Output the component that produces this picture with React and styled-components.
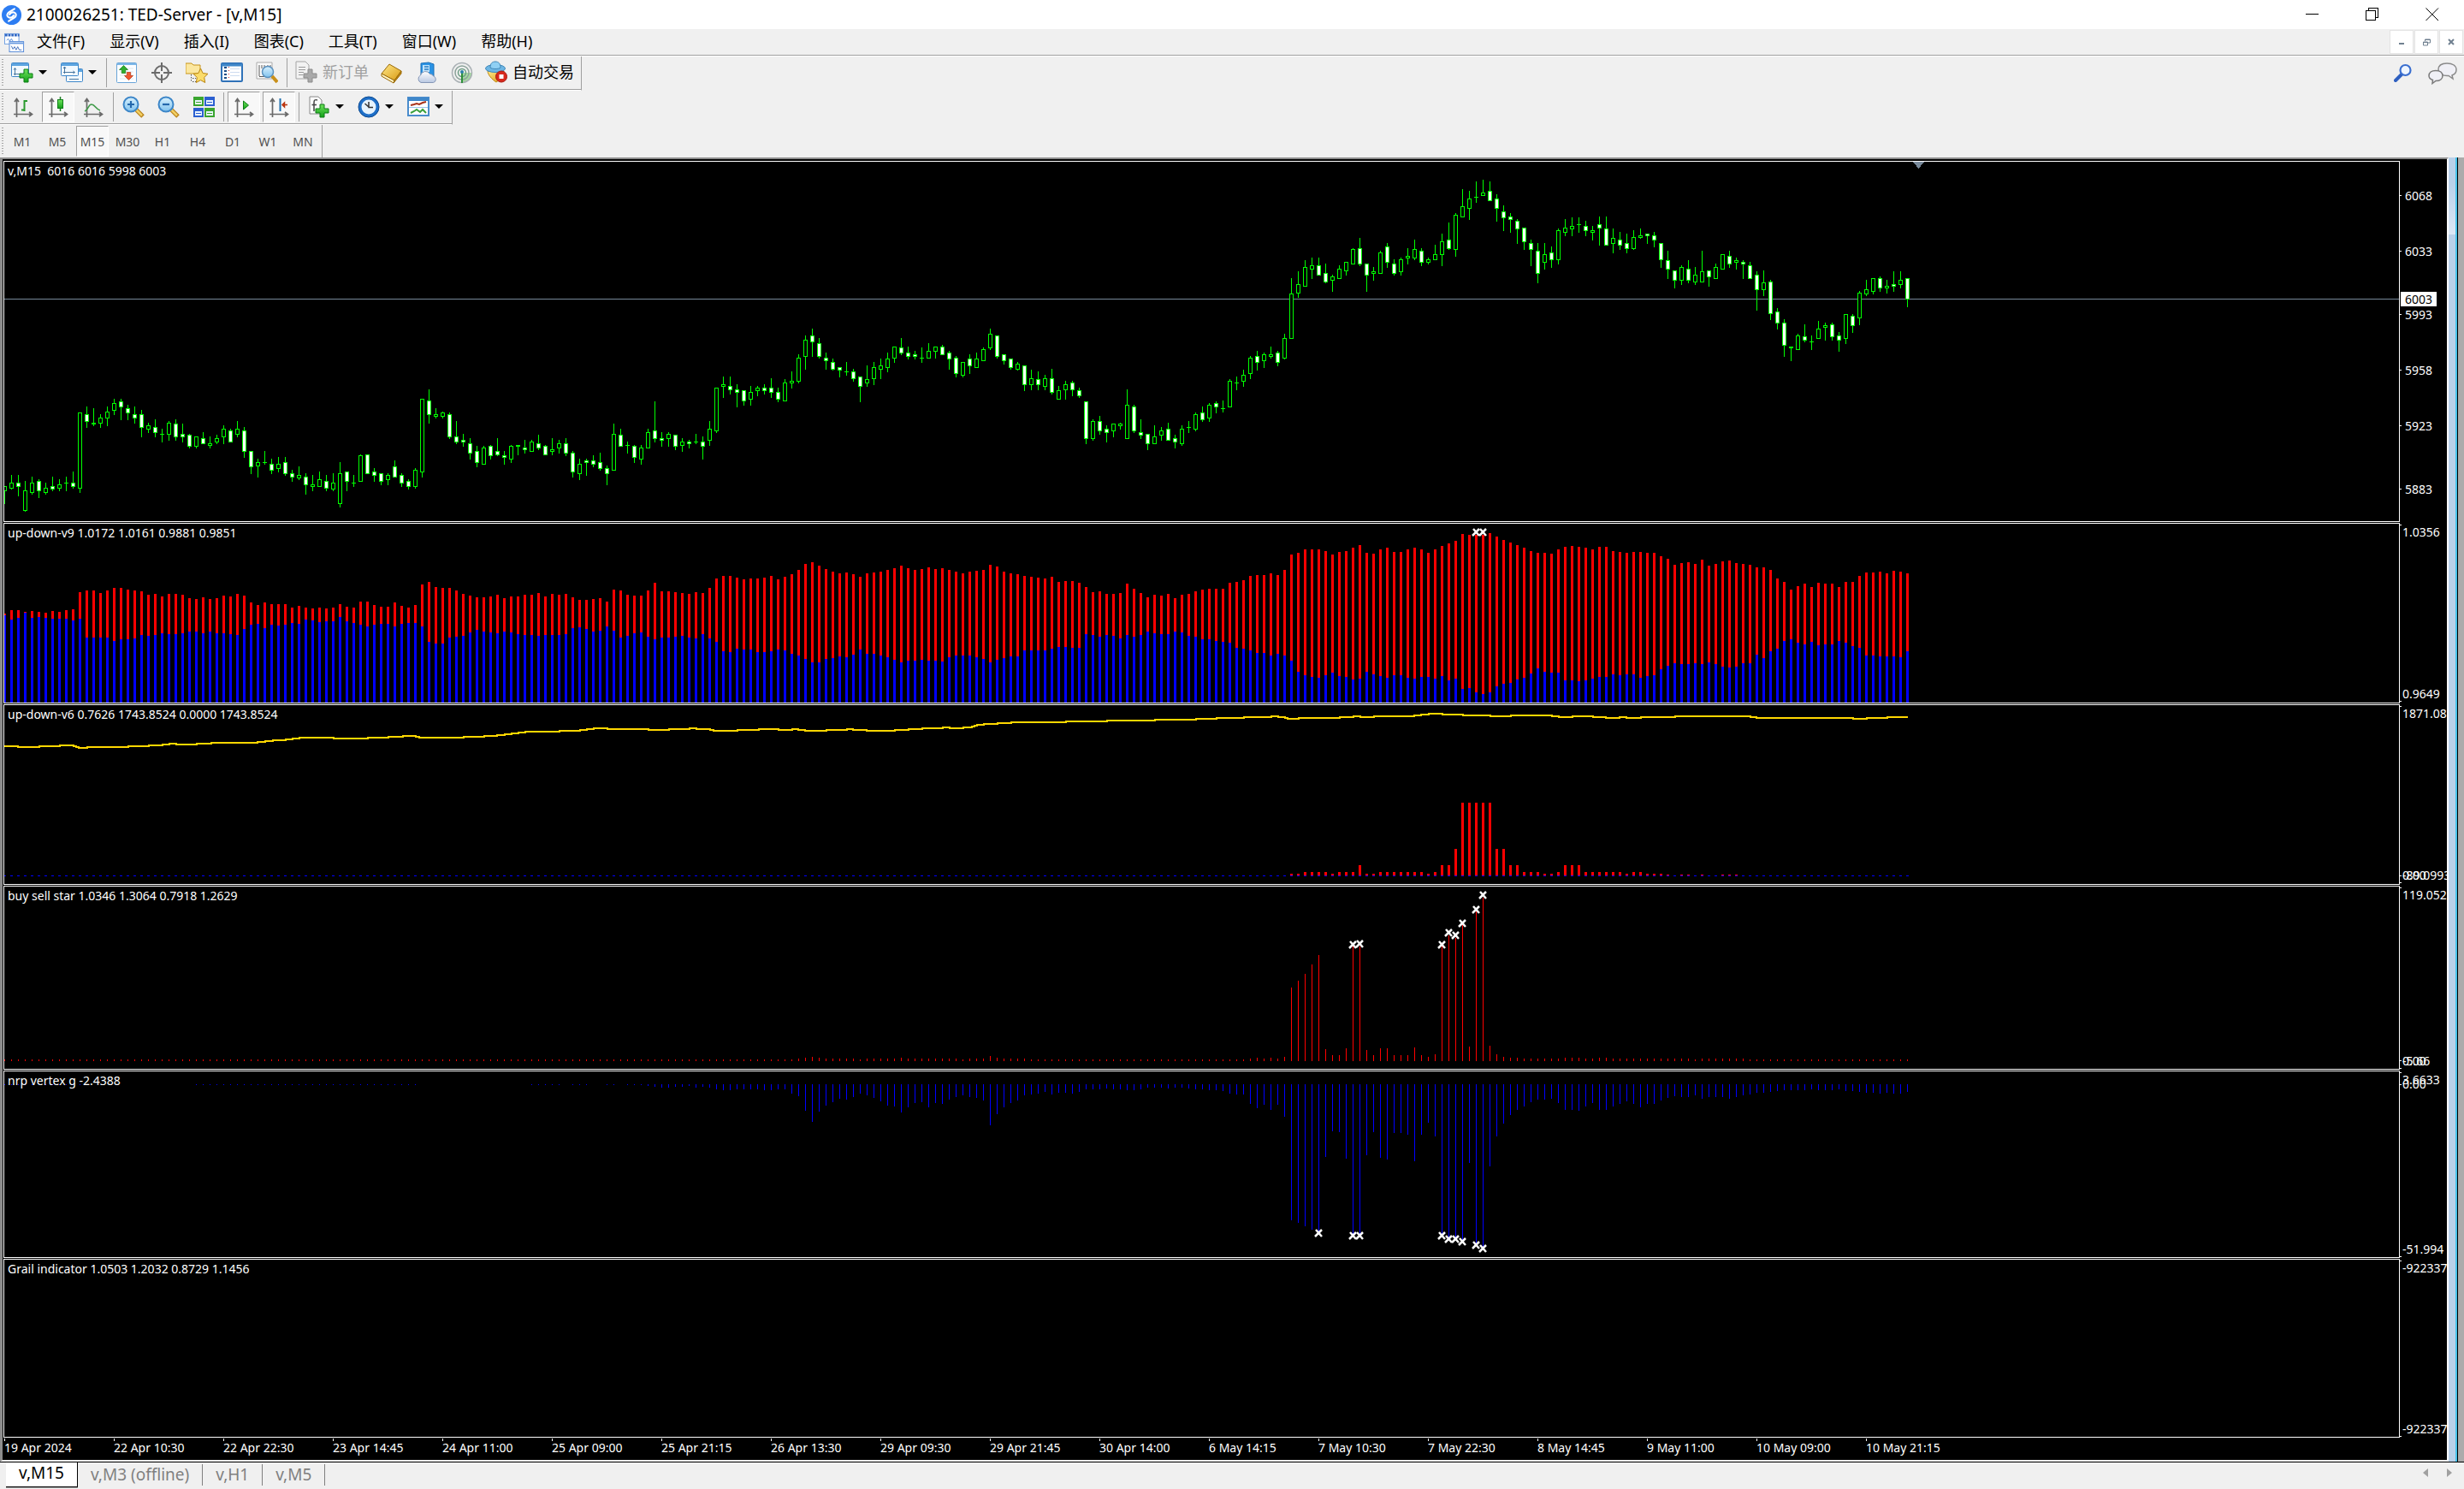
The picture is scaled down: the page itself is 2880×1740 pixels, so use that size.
import React from "react";
import styled, { createGlobalStyle, css } from "styled-components";

/* ---------------------------------------------------------------- data */

/* Quotes are kept in thirds of a pixel below `base`: high, body top, body bottom, low, kind.
   Kind: u = rising (hollow), d = falling (filled), n = no body. */
const SESSIONS = [
  {
    base: 633,
    quotes:
      "503 503 522 567 u,465 492 513 516 u,465 492 507 540 d,486 519 591 594 u,471 492 528 534 u,480 486 522 546 d,492 510 528 534 u,471 504 516 522 d,480 498 513 522 u,471 492 495 522 n,453 492 507 513 d,246 246 513 528 u,225 252 279 300 d,231 282 288 294 d,252 264 285 300 u,225 243 267 294 u,198 213 240 255 u,198 207 228 273 d,219 231 249 273 d,225 252 267 285 d,237 252 300 333 d,282 291 306 318 u,270 297 318 333 d,303 321 324 351 n,276 282 324 345 u,270 285 333 345 d,285 321 333 351 d,321 324 366 372 d,330 330 366 372 u,315 336 357 357 d,330 354 363 372 u,324 336 351 357 u,291 303 333 357 u,303 309 351 351 d,276 303 324 333 u,297 309 384 405 d,381 381 438 462 d,408 420 435 474 u,381 420 423 429 n,408 426 450 462 d,402 426 444 456 u,402 420 462 468 d,447 459 474 489 d,435 465 477 483 u,459 471 501 534 d,465 498 507 522 u,453 480 507 507 u,465 486 513 522 d,459 492 516 522 u,420 459 567 579 u,453 453 489 522 d,465 492 495 507 n,393 396 489 489 u,393 393 462 462 d,441 453 468 489 d,459 459 489 501 d,459 465 483 501 u,414 435 474 474 d,459 465 495 507 d,480 486 507 516 d,441 447 507 513 u,198 198 456 474 u,165 204 255 285 d,231 252 261 267 u,243 246 261 267 u,246 252 333 339 d,276 330 351 357 d,321 342 351 366 d,336 354 390 411 d,363 381 423 438 d,363 369 429 429 u,360 363 399 411 d,336 381 396 399 d,381 396 405 429 d,360 363 411 423 u,360 360 366 396 d,342 369 378 390 d,342 348 384 384 u,324 354 372 378 d,360 363 396 396 d,336 375 384 396 u,342 354 372 390 u,336 354 390 399 d,381 387 456 474 d,408 426 462 483 u,408 414 423 468 d,396 414 429 438 d,387 420 444 450 d,432 441 462 501 d,285 321 450 450 u,303 324 366 366 d,348 360 363 390 n,360 363 405 423 d,360 369 411 429 u,303 315 372 372 u,207 309 339 351 d,315 336 345 366 d",
  },
  {
    base: 453,
    quotes:
      "495 501 519 546 u,504 504 546 558 d,516 528 543 564 u,522 528 537 552 d,501 528 531 537 n,510 528 546 591 d,456 483 525 543 u,339 339 492 498 u,300 327 336 375 u,300 333 348 363 d,327 345 357 408 d,348 348 387 402 d,333 354 381 402 u,333 339 351 369 u,327 339 351 363 d,306 339 357 375 d,339 354 381 390 d,309 321 387 387 u,282 315 324 342 u,222 234 318 324 u,156 171 231 276 u,132 156 180 231 d,165 183 231 237 d,216 234 246 276 d,237 249 276 279 d,267 267 279 303 d,249 282 285 297 n,273 282 309 318 d,300 300 336 390 d,261 309 324 336 u,249 267 309 330 u,237 261 276 309 u,216 237 270 285 u,195 195 237 252 u,165 198 219 225 d,195 216 231 240 d,210 222 231 240 d,198 234 237 252 n,183 210 237 237 u,195 195 213 237 u,189 195 225 225 d,210 216 240 276 d,228 234 291 303 d,249 249 297 303 u,222 237 264 291 d,216 237 270 270 u,198 204 246 246 u,132 150 201 207 u,156 156 231 237 d,222 222 246 258 d,237 237 270 276 d,249 255 276 279 u,261 261 330 351 d,276 306 330 348 u,282 309 330 348 d,294 306 336 348 u,273 306 357 363 d,333 348 381 381 u,315 327 348 381 u,315 321 348 369 d,339 348 369 375 d,387 387 519 537 d,450 456 519 525 u,438 456 492 504 d,471 483 498 531 d,465 465 492 513 u,462 465 474 486 u,345 399 519 519 u,399 405 492 498 d,450 495 507 519 d,501 501 537 558 d,471 510 537 537 u,477 489 507 525 u,462 483 525 525 d,504 516 531 552 d,471 483 537 543 u,456 477 480 498 n,426 432 486 492 u,405 426 453 459 d,393 399 447 459 u,387 393 408 429 d,384 411 414 426 n,309 315 408 408 u,300 321 324 348 n,276 294 318 336 u,228 234 291 309 u,210 228 252 279 d,216 222 246 270 u",
  },
  {
    base: 3,
    quotes:
      "645 672 681 687 u,660 666 702 714 d,600 615 687 690 u,405 459 618 618 u,381 426 459 474 u,342 366 435 435 u,333 360 375 408 u,333 360 396 396 d,354 387 420 423 d,393 399 414 453 u,360 372 408 408 u,348 348 381 396 u,300 303 357 357 u,264 300 357 363 d,354 354 396 453 d,366 381 390 414 u,309 315 390 390 u,282 294 351 369 d,339 354 390 396 d,333 339 384 396 u,300 327 336 357 u,270 303 336 342 u,300 309 351 363 d,333 339 351 357 u,288 321 342 342 u,249 276 324 363 u,210 270 303 306 d,177 183 306 330 u,93 153 192 192 u,99 126 162 201 u,66 120 123 141 n,60 105 117 117 u,66 99 135 135 d,111 126 162 207 d,150 171 195 240 d,177 189 201 246 d,198 204 234 285 d,228 228 279 306 d,270 282 306 363 d,282 309 390 423 d,282 321 351 375 u,294 315 342 369 d,231 237 342 357 u,198 228 246 258 u,192 222 234 258 u,192 216 219 246 n,204 222 240 258 d,222 237 246 273 u,189 216 231 291 d,189 231 291 291 d,231 264 285 318 u,243 270 291 306 d,249 282 303 318 d,237 261 303 306 u,231 255 264 267 u,249 249 258 285 d,243 255 273 297 d,282 282 342 369 d,309 342 375 408 d,378 378 414 441 d,360 366 414 429 u,342 372 414 423 d,366 393 420 429 u,309 381 420 420 u,378 378 402 435 d,354 366 408 408 u,321 321 375 375 u,309 327 357 369 d,333 342 351 375 u,342 348 357 408 d,348 360 408 408 d,381 393 447 519 d,378 420 447 468 u,411 417 531 552 d,510 522 564 585 d,549 561 642 681 d,645 645 651 696 d,600 606 657 657 u,567 609 624 630 d,606 627 630 657 n,555 582 618 618 u,561 570 579 624 u,561 567 612 624 d,594 606 624 663 d,531 531 618 636 u,531 537 573 597 d,450 456 546 570 u,411 444 462 468 u,405 405 453 462 u,399 405 441 453 d,411 432 441 459 u,381 426 435 453 d,381 411 429 441 u,405 405 480 507 d",
  },
];

const CANDLES = SESSIONS.flatMap(({ base, quotes }) =>
  quotes.split(",").map((q) => {
    const [high, top, bottom, low, kind] = q.split(" ");
    const px = (v) => Math.round((base + Number(v)) / 3);
    return { high: px(high), top: px(top), bottom: px(bottom), low: px(low), kind };
  })
);

const list = (s) => s.split(",").map(Number);

const UPPER = list(
  "351,339,339,345,342,345,348,342,345,339,336,276,270,270,279,270,261,261,267,270,273,285,282,291,282,282,285,297,300,294,300,297,288,291,282,288,312,321,312,318,318,318,330,324,330,333,330,333,330,318,327,330,309,309,321,327,327,312,324,330,321,249,240,258,261,261,270,282,288,294,294,291,285,297,291,291,285,285,279,291,282,285,282,294,303,303,300,297,309,267,270,285,288,288,270,243,273,273,276,279,282,276,279,261,228,219,219,225,231,228,228,225,219,231,222,213,198,177,171,183,195,204,210,207,213,222,210,207,204,198,192,183,192,198,195,189,195,192,198,204,210,204,201,198,180,186,204,210,213,219,222,225,228,222,240,237,237,243,258,276,273,282,282,279,246,264,279,294,285,288,282,297,285,282,273,267,264,264,264,243,240,234,219,216,216,210,216,198,144,138,126,126,126,132,144,135,132,120,111,138,141,126,120,135,135,126,120,126,138,126,114,105,96,72,75,75,75,69,81,93,102,111,120,132,138,138,141,126,117,114,117,120,126,117,117,132,135,138,135,135,138,138,150,159,180,174,171,177,162,183,177,168,165,174,177,180,189,189,198,228,240,267,255,246,258,243,246,246,258,240,240,219,207,207,204,210,201,204,210"
);
const LOWER = list(
  "357,372,366,348,366,363,366,369,369,369,375,369,435,435,435,435,447,441,441,438,426,429,426,420,423,423,420,414,414,420,414,420,420,423,426,405,390,387,402,390,393,390,384,387,372,375,381,378,378,363,378,384,390,396,390,387,387,396,387,384,384,396,450,456,456,435,432,429,417,408,414,417,420,414,417,423,426,426,429,426,426,426,423,402,399,405,414,411,396,411,435,429,420,417,432,441,435,435,432,429,435,438,423,438,450,483,486,474,477,477,486,486,483,477,480,492,498,510,522,522,510,507,501,504,495,477,492,492,498,504,513,522,516,516,513,516,516,519,504,498,498,498,504,510,522,513,507,501,501,480,480,480,480,474,468,468,471,471,423,426,432,426,429,438,426,432,426,414,420,423,423,414,417,429,432,441,441,447,450,453,471,474,480,489,489,498,492,498,516,555,567,573,576,567,558,570,573,582,579,555,564,570,576,567,567,576,579,573,573,579,570,585,579,615,612,627,633,627,606,597,594,582,576,561,543,555,558,558,585,585,588,585,579,573,573,564,567,564,564,576,570,567,546,534,525,528,528,525,528,522,528,537,540,537,525,525,495,507,483,474,447,441,453,459,450,462,459,459,447,453,465,471,498,498,501,501,501,504,483"
);

/* Average line: x where the level changes, then the new level (thirds of a pixel). */
const AVERAGE = list(
  "5,816,21,819,46,816,70,813,86,816,89,819,92,822,102,819,150,816,174,813,190,810,198,807,206,810,230,807,247,804,301,801,310,798,319,795,334,792,342,789,350,786,390,789,430,786,454,783,471,780,486,783,490,786,542,783,566,780,581,777,590,774,598,771,606,768,614,765,654,762,678,759,686,756,694,753,710,756,758,759,782,756,806,753,814,756,830,759,834,762,862,759,887,756,910,759,926,756,933,759,941,762,966,759,990,756,997,759,1013,762,1046,759,1062,756,1078,753,1102,750,1110,753,1126,750,1136,747,1139,744,1142,741,1150,738,1166,735,1182,732,1246,729,1294,726,1350,723,1398,720,1422,717,1454,714,1486,711,1494,714,1502,717,1505,720,1518,717,1566,714,1582,711,1590,714,1606,711,1653,708,1661,705,1670,702,1686,705,1710,708,1742,711,1766,708,1814,711,1822,714,1838,711,1862,714,1877,717,1893,714,1901,717,1918,714,1958,711,2046,714,2053,717,2166,720,2182,717,2206,714,2230,714"
);

/* Pulse histogram from bar 188 on (pixels high). */
const PULSE = list(
  "2,2,4,4,4,4,2,4,4,4,12,2,2,4,4,4,4,4,4,4,2,4,12,12,31,85,85,85,85,85,31,31,12,12,4,4,4,2,2,4,12,12,12,4,4,4,4,4,4,2,4,4,2,2,2,1,0,1,1,0,1,0,0,1,1,1"
);

/* Star histogram from bar 116 on (thirds of a pixel). */
const STAR = [
  ...Array(116).fill(6),
  ...list(
    "9,12,15,12,9,9,9,9,9,6,9,9,9,9,9,12,9,9,9,9,9,9,9,9,6,9,9,9,18,12,9,9,9,9,6,6,6,6,6,6,6,6,6,6,6,6,6,6,6,6,6,6,6,6,6,6,6,6,6,6,6,6,6,6,6,6,9,12,9,12,9,15,258,282,306,339,372,42,21,21,45,402,402,39,21,45,45,21,21,21,48,21,15,24,405,440,432,477,51,525,573,54,24,15,12,12,9,9,9,9,9,9,12,12,12,9,9,12,12,9,9,9,9,9,9,9,9,9,9,9,9,6,9,9,9,9,9,9,9"
  ),
  ...Array(24).fill(6),
];

/* Vertex histogram, depth below the zero level (thirds of a pixel). */
const VERTEX = [
  ...Array(12).fill(3),
  ...Array(16).fill(0),
  ...Array(33).fill(3),
  ...Array(16).fill(0),
  ...list("3,3,3,3,3,0,3,3,3,0,0,3,3,0,3,3,3,6,9,12"),
  ...list(
    "12,9,9,6,12,9,12,18,21,21,18,18,18,18,21,21,18,18,33,42,93,132,96,75,63,51,54,45,33,39,48,60,75,78,99,81,66,63,81,66,69,54,45,39,45,48,57,144,105,81,66,57,39,36,33,27,36,30,30,33,27,18,18,18,15,18,18,21,21,18,12,12,12,15,12,12,15,18,18,21,21,24,33,36,36,69,84,72,90,72,114,477,486,498,510,516,255,165,168,261,525,525,249,168,258,264,171,171,177,270,177,135,183,525,537,537,546,276,558,570,288,183,138,108,90,78,63,54,54,51,66,90,90,93,78,66,90,90,78,69,60,69,81,69,69,57,48,42,45,45,39,51,45,45,45,51,45,39,36,30,30,27,24,21,21,21,21,18,21,21,21,18,24,24,27,30,30,33,30,33,33,27"
  ),
];

const TIMES = [
  "19 Apr 2024", "22 Apr 10:30", "22 Apr 22:30", "23 Apr 14:45", "24 Apr 11:00", "25 Apr 09:00",
  "25 Apr 21:15", "26 Apr 13:30", "29 Apr 09:30", "29 Apr 21:45", "30 Apr 14:00", "6 May 14:15",
  "7 May 10:30", "7 May 22:30", "8 May 14:45", "9 May 11:00", "10 May 09:00", "10 May 21:15",
];

/* -------------------------------------------------------------- styles */

const UI_FONT = `"Noto Sans", "Noto Sans CJK SC", sans-serif`;
const CHART_FONT = `"Noto Sans", sans-serif`;

const GlobalStyle = createGlobalStyle`
  * { box-sizing: border-box; }
  html, body { margin: 0; height: 100%; background: #f0f0f0; }
  body { font-family: ${UI_FONT}; font-size: 18px; color: #000; overflow: hidden; }
  button { font: inherit; color: inherit; background: none; border: 0; padding: 0; margin: 0; }
  svg { display: block; }
`;

const Frame = styled.div`
  display: flex;
  flex-direction: column;
  height: 100vh;
  min-width: 0;
`;

const TitleBar = styled.header`
  display: flex;
  align-items: center;
  height: 34px;
  background: #fff;
  padding: 0 2px;
`;

const Title = styled.h1`
  flex: 1;
  margin: 0 0 0 4px;
  font-size: 19px;
  line-height: 32px;
  font-weight: 400;
`;

const WindowButton = styled.button`
  width: 70px;
  height: 34px;
  display: grid;
  place-items: center;
`;

const MenuBar = styled.nav`
  display: flex;
  align-items: center;
  height: 32px;
  padding-left: 5px;
  border-bottom: 1px solid #fff;
  box-shadow: inset 0 -1px #a0a0a0;
`;

const MenuList = styled.div`
  display: flex;
  flex: 1;
  gap: 1px;
  padding-bottom: 4px;
`;

const MenuButton = styled.button`
  padding: 0 14px;
  font-size: 18px;
  line-height: 26px;
`;

const ChildButton = styled.button`
  width: 28px;
  height: 28px;
  margin: 0 1px 1px 0;
  display: grid;
  place-items: center;
  background: #fff;
  border: 1px solid #e3e3e3;
`;

const ToolRow = styled.div`
  display: flex;
  justify-content: space-between;
  height: ${(p) => (p.$last ? 38 : 40)}px;
`;

const Toolbar = styled.div`
  display: flex;
  align-items: center;
  padding-left: ${(p) => p.$lead}px;
  border-right: 1px solid #a0a0a0;
  position: relative;
  ${(p) =>
    !p.$last &&
    css`
      padding-bottom: 2px;
      border-bottom: 1px solid #fff;
      box-shadow: inset 0 -1px #a0a0a0;
    `}
  &::before {
    content: "";
    position: absolute;
    left: 2px;
    top: 3px;
    bottom: 4px;
    width: 2px;
    background: repeating-linear-gradient(#a6a6a6 0 1px, transparent 1px 3px);
  }
`;

const ToolButton = styled.button`
  display: flex;
  align-items: center;
  justify-content: center;
  width: ${(p) => (p.$wide ? "auto" : "38px")};
  height: 36px;
  margin-right: 3px;
  color: ${(p) => (p.$muted ? "#a0a0a0" : "#000")};
  border: 1px solid transparent;
  ${(p) =>
    p.$wide &&
    css`
      padding: 0 4px;
      gap: 6px;
      line-height: 24px;
      padding-bottom: 2px;
      white-space: nowrap;
    `}
  ${(p) =>
    p.$pressed &&
    css`
      background: #f8f8f8;
      border-color: #a0a0a0 #fff #fff #a0a0a0;
    `}
`;

const SplitButton = styled(ToolButton)`
  width: 58px;
  margin-right: 0;
  padding-left: 5px;
  gap: 6px;
  justify-content: flex-start;
`;

const Caret = styled.i`
  border: 5px solid transparent;
  border-top-color: #000;
  border-bottom-width: 0;
`;

const PeriodButton = styled(ToolButton)`
  font-family: ${CHART_FONT};
  font-size: 14px;
  color: #505050;
`;

const Divider = styled.i`
  width: 1px;
  height: 34px;
  margin: 0 4px 0 1px;
  background: #a0a0a0;
`;

const Corner = styled.div`
  display: flex;
  align-items: center;
  gap: 10px;
  padding-right: 8px;
`;

const Workspace = styled.main`
  flex: 1;
  min-height: 0;
  display: flex;
  border-bottom: 1px solid #000;
`;

const ChartWindow = styled.section`
  flex: 1;
  min-width: 0;
  display: flex;
  flex-direction: column;
  gap: 1px;
  padding: 2px 0 0 1px;
  background: #000;
  border-style: solid;
  border-width: 2px 2px 2px 3px;
  border-color: #8c8c8c #fff #f4f4f4 #8c8c8c;
`;

const Pane = styled.div`
  flex: ${(p) => p.$weight} 1 0;
  min-height: 0;
  display: grid;
  grid-template-columns: minmax(0, 1fr) 55px;
`;

const Plot = styled.div`
  position: relative;
  border: 1px solid #fff;
  overflow: hidden;
`;

const Canvas = styled.svg`
  width: 100%;
  height: 100%;
  shape-rendering: crispEdges;
`;

const Caption = styled.span`
  position: absolute;
  left: 4px;
  top: 3px;
  font-family: ${CHART_FONT};
  font-size: 14px;
  line-height: 16px;
  color: #fff;
  white-space: pre;
`;

const Scale = styled.svg`
  width: 100%;
  height: 100%;
  overflow: hidden;
  font-family: ${CHART_FONT};
  font-size: 14px;
  fill: #fff;
`;

const TimeAxis = styled.div`
  display: flex;
  height: 25px;
  padding-left: 1px;
`;

const TimeMark = styled.span`
  width: 128px;
  font-family: ${CHART_FONT};
  font-size: 14px;
  line-height: 16px;
  color: #fff;
  white-space: nowrap;
  &::before {
    content: "";
    display: block;
    width: 1px;
    height: 3px;
    background: #fff;
  }
`;

const Sill = styled.aside`
  width: 18px;
  display: flex;
  background: #ababab;
`;

const Glass = styled.div`
  width: 11px;
  border-right: 1px solid #000;
  box-shadow: inset -2px 0 #46c3ea;
  background: linear-gradient(#b9d1ea 0, #b9d1ea 30px, #dce8f6 90px, #b9d1ea 90px);
`;

const TabBar = styled.footer`
  display: flex;
  height: 31px;
  padding-left: 7px;
  justify-content: space-between;
`;

const Tabs = styled.div`
  display: flex;
  align-items: flex-start;
`;

const Tab = styled.button`
  height: ${(p) => (p.$active ? 29 : 25)}px;
  margin-top: ${(p) => (p.$active ? 0 : 2)}px;
  padding: 0 15px;
  padding-bottom: ${(p) => (p.$active ? 4 : 2)}px;
  font-size: 19px;
  line-height: ${(p) => (p.$active ? 24 : 20)}px;
  color: ${(p) => (p.$active ? "#000" : "#808080")};
  background: ${(p) => (p.$active ? "#fff" : "none")};
  border-right: 1px solid ${(p) => (p.$active ? "#000" : "#808080")};
  border-bottom: ${(p) => (p.$active ? "1px solid #000" : "0")};
  box-shadow: ${(p) => (p.$active ? "0 1px #a0a0a0" : "none")};
`;

const TabArrows = styled.div`
  display: flex;
  gap: 22px;
  padding: 7px 14px 0 0;
`;

const ArrowButton = styled.button`
  width: 6px;
  height: 10px;
`;

/* --------------------------------------------------------------- icons */

const Icon = ({ size = 26, children }) => (
  <svg width={size} height={size} viewBox="0 0 26 26" fill="none" aria-hidden="true">
    {children}
  </svg>
);

const Gradients = () => (
  <svg width="0" height="0" style={{ position: "absolute" }} aria-hidden="true">
    <defs>
      <linearGradient id="green" x1="0" y1="0" x2="0" y2="1">
        <stop offset="0" stopColor="#6fe25c" />
        <stop offset="1" stopColor="#12a018" />
      </linearGradient>
      <linearGradient id="gold" x1="0" y1="0" x2="1" y2="1">
        <stop offset="0" stopColor="#ffe98a" />
        <stop offset="1" stopColor="#d99a12" />
      </linearGradient>
      <linearGradient id="sky" x1="0" y1="0" x2="0" y2="1">
        <stop offset="0" stopColor="#d9f1fd" />
        <stop offset="1" stopColor="#7fc2ee" />
      </linearGradient>
      <linearGradient id="cloud" x1="0" y1="0" x2="0" y2="1">
        <stop offset="0" stopColor="#fff" />
        <stop offset="1" stopColor="#b9c8e2" />
      </linearGradient>
    </defs>
  </svg>
);

const Plus = ({ x, y, fill = "url(#green)", stroke = "#0b7d12" }) => (
  <path
    d={`M${x + 5} ${y}h5v5h5v5h-5v5h-5v-5h-5v-5h5z`}
    fill={fill}
    stroke={stroke}
    strokeWidth="1"
  />
);

const Panel = ({ x, y, w, h }) => (
  <g>
    <rect x={x + 0.5} y={y + 0.5} width={w} height={h} rx="1" fill="#f2f9ff" stroke="#3f87c9" />
    <rect x={x + 1} y={y + 1} width={w - 1} height="3" fill="#5da5e0" />
  </g>
);

const LogoIcon = () => (
  <Icon size={25}>
    <circle cx="12" cy="13" r="12" fill="#2d7df2" />
    <path d="M15.500 5.500L9 9.500c-3.500 2.200-3 5.500 0 6.500 2.500.8 4.500-.5 5.500-2.500" stroke="#fff" strokeWidth="2.200" strokeLinecap="round" />
    <path d="M8.500 20.500l6.500-4c3.500-2.200 3-5.500 0-6.500-2.500-.8-4.500.5-5.500 2.500" stroke="#fff" strokeWidth="2.200" strokeLinecap="round" />
  </Icon>
);

const ChartsIcon = () => (
  <Icon size={24}>
    <rect x=".5" y="1.500" width="18" height="13" fill="#fff" stroke="#6a9be0" />
    <path d="M1 3.500h18" stroke="#2f66c4" strokeWidth="3" strokeDasharray="3 1" />
    <path d="M3 10l2-2 2 3 2-3 2 3" stroke="#4d84d6" />
    <rect x="6.500" y="11.500" width="18" height="13" fill="#fff" stroke="#4d84d6" />
    <path d="M7 13.500h18" stroke="#6a9be0" strokeWidth="2" />
    <path d="M9 17l2 4 2-3 2 4 2-4 2 4h3" stroke="#3868b8" />
  </Icon>
);

const NewChartIcon = () => (
  <Icon>
    <Panel x={0} y={1} w={20} h={16} />
    <path d="M4.500 8v8M3 9.500l1.500-2 1.500 2M3 14.500h13M14.500 13l2 1.500-2 1.500" stroke="#48769e" />
    <Plus x={10} y={9} />
  </Icon>
);

const ProfilesIcon = () => (
  <Icon>
    <Panel x={6} y={8} w={19} h={15} />
    <Panel x={0} y={1} w={20} h={15} />
    <path d="M4.500 6v8M3 12.500h13M14.500 11l2 1.500-2 1.500M3 8l1.500-2L6 8M10 20.500h11" stroke="#48769e" />
  </Icon>
);

const MarketIcon = () => (
  <Icon>
    <rect x="1.500" y="1.500" width="23" height="23" rx="1" fill="#fbfdff" stroke="#6aa5d8" />
    <rect x="2" y="2" width="22" height="2" fill="#7db8e8" />
    <path d="M5 8h16M5 12h16M5 16h16M5 20h16" stroke="#dde7ee" />
    <path d="M9.500 4.500l5 5h-2.800v4H7.300v-4H4.500z" fill="#2fae2c" stroke="#157a17" strokeWidth=".7" />
    <path d="M15.500 21.500l5-5h-2.800v-4h-4.400v4h-2.800z" fill="#f0552e" stroke="#b3330f" strokeWidth=".7" />
  </Icon>
);

const CrosshairIcon = () => (
  <Icon>
    <circle cx="13" cy="13" r="8" stroke="#6b6b6b" strokeWidth="2" />
    <path d="M13 1v10M13 15v10M1 13h10M15 13h10" stroke="#6b6b6b" strokeWidth="2" />
  </Icon>
);

const NavigatorIcon = () => (
  <Icon>
    <path d="M0 2h7l2 2h8v10H0z" fill="#fbe7a0" stroke="#c79318" />
    <path d="M6.500 15v9M8 19.500h4M8 23.500h4" stroke="#555" strokeDasharray="1.500 1.500" />
    <path d="M17.500 8l2.600 5.500 5.900.8-4.300 4.200 1 6-5.200-2.900-5.200 2.900 1-6L9 14.300l5.900-.8z" fill="#fbdc6a" stroke="#b98510" />
  </Icon>
);

const TerminalIcon = () => (
  <Icon>
    <rect x="1" y="2" width="24" height="21" rx="1" fill="#fff" stroke="#2f72b8" strokeWidth="2" />
    <path d="M1 4h24" stroke="#3f87c9" strokeWidth="3" />
    <path d="M5.500 6v16" stroke="#1d4d86" strokeWidth="3" strokeDasharray="2 2" />
    <path d="M9.500 6v16" stroke="#c33" strokeDasharray="1 3" />
    <path d="M11 8.500h11M11 12.500h11M11 16.500h11" stroke="#cddcf0" />
  </Icon>
);

const TesterIcon = () => (
  <Icon>
    <path d="M1 1h18v19H1z" fill="#fafafa" stroke="#aaa" />
    <path d="M4 4v13M7 4v4M10 4v3M14 4v5M17 4v4M4 17.500h8" stroke="#5a5a5a" />
    <circle cx="14" cy="12" r="6.500" fill="url(#sky)" stroke="#5c92bf" strokeWidth="1.500" />
    <path d="M19 17l6 7" stroke="#c9901a" strokeWidth="4" />
  </Icon>
);

const OrderIcon = () => (
  <Icon>
    <path d="M1 1h11l4 4v16H1z" fill="#f2f2f2" stroke="#a4a4a4" />
    <path d="M4 7.500h8M4 10.500h8M4 13.500h6M4 16.500h5" stroke="#9a9a9a" />
    <Plus x={10} y={10} fill="#a9a9a9" stroke="#8b8b8b" />
  </Icon>
);

const BookIcon = () => (
  <Icon>
    <path d="M1 14L10 3l14 8-8 11z" fill="url(#gold)" stroke="#9a6a08" />
    <path d="M1 14v3l14 8 1-3z" fill="#fff3c4" stroke="#9a6a08" />
    <path d="M16 22l-1 3 9-11v-3z" fill="#c98d12" stroke="#9a6a08" />
  </Icon>
);

const ServerIcon = () => (
  <Icon>
    <path d="M6 2l9-1 6 2v14H6z" fill="#2b93e4" stroke="#1a6fb8" />
    <path d="M8 4h8v8H8z" fill="#bfe2fa" />
    <path d="M10 6h5M10 9h5" stroke="#2b7fc4" strokeWidth="1.500" />
    <path d="M6 24.500a4.700 4.700 0 0 1-.5-8.500 6 6 0 0 1 11-1.500 4 4 0 0 1 4 2.500 3.900 3.900 0 0 1 0 7.500z" fill="url(#cloud)" stroke="#8496b6" />
  </Icon>
);

const SignalIcon = () => (
  <Icon>
    <path d="M13 13v12c7-1 12-6 12-12z" fill="#a6d8a2" />
    <circle cx="13" cy="13" r="11.500" stroke="#a9b0b4" strokeWidth="1.500" />
    <circle cx="13" cy="13" r="8" stroke="#8ca29a" strokeWidth="1.500" />
    <circle cx="13" cy="13" r="4.500" stroke="#6b9c84" strokeWidth="1.500" />
    <path d="M13 25V13" stroke="#2f8f3a" strokeWidth="2" />
    <circle cx="13" cy="12" r="2" fill="#2a7fa8" />
  </Icon>
);

const ExpertIcon = () => (
  <Icon>
    <path d="M3 12h19c0 4-4 10-9 13-5-3-10-9-10-13z" fill="url(#gold)" stroke="#c08a14" />
    <ellipse cx="12" cy="9" rx="11.500" ry="4.500" fill="#6db6e4" stroke="#3f87b8" />
    <path d="M6 8c0-5 2.500-7 6-7s6 2 6 7c-2 2-10 2-12 0z" fill="#8fd0f4" stroke="#3f87b8" />
    <circle cx="19" cy="18.500" r="6.500" fill="#d8281c" stroke="#a81a10" />
    <rect x="16.500" y="16" width="5" height="5" fill="#fff" />
  </Icon>
);

const Axes = () => (
  <path d="M5.500 25V4M3 7l2.500-3.500L8 7M2 21.500h21M20 19l3.500 2.500L20 24" stroke="#6a6a6a" strokeWidth="1.700" />
);

const BarsIcon = () => (
  <Icon>
    <Axes />
    <path d="M14.500 5v13M14.500 6H18M11 16.500h3.500" stroke="#2a9a2e" strokeWidth="2" />
  </Icon>
);
const CandlesIcon = () => (
  <Icon>
    <Axes />
    <path d="M15.500 1v17" stroke="#1c7d22" strokeWidth="1.500" />
    <rect x="12.500" y="4.500" width="6" height="10" fill="url(#green)" stroke="#0f7f18" />
  </Icon>
);
const LineIcon = () => (
  <Icon>
    <Axes />
    <path d="M3 18c4-1 4-8 8-8s5 6 10 7" stroke="#3f9a48" strokeWidth="1.600" />
  </Icon>
);

const LensIcon = ({ plus }) => (
  <Icon>
    <path d="M16 16l8 8" stroke="#b9831c" strokeWidth="5" />
    <path d="M16 16l7 7" stroke="#f2cf63" strokeWidth="2.500" />
    <circle cx="10" cy="10" r="8.500" fill="url(#sky)" stroke="#3c86c8" strokeWidth="2" />
    <path d={plus ? "M6 10h8M10 6v8" : "M6 10h8"} stroke="#2468ac" strokeWidth="2.200" />
  </Icon>
);

const TilesIcon = () => (
  <Icon>
    {[[1, 1, "#3aa52f"], [14, 1, "#2b5fd0"], [1, 14, "#2b5fd0"], [14, 14, "#3aa52f"]].map(([x, y, c]) => (
      <g key={`${x}-${y}`}>
        <rect x={x} y={y} width="12" height="11" fill={c} />
        <rect x={x + 2} y={y + 4} width="8" height="5" fill="#eaf4ff" />
        <path d={`M${x + 3} ${y + 6.500}h6`} stroke={c} />
      </g>
    ))}
  </Icon>
);

const ScrollIcon = () => (
  <Icon>
    <Axes />
    <path d="M12.500 6l6 5-6 5z" fill="url(#green)" stroke="#0f7f18" />
  </Icon>
);
const ShiftIcon = () => (
  <Icon>
    <Axes />
    <path d="M14.500 3v15" stroke="#1f6fae" strokeWidth="2" />
    <path d="M23 10.500h-4M19.500 8L17 10.500l2.500 2.500z" fill="#d8461c" stroke="#b8340f" strokeWidth="1.500" />
  </Icon>
);

const IndicatorsIcon = () => (
  <Icon>
    <path d="M2 1h10l4 4v16H2z" fill="#fbfbfb" stroke="#8a8a8a" />
    <path d="M11 5c-3-1-4 0-4 3v10M4.500 10.500H10" stroke="#444" strokeWidth="1.500" />
    <Plus x={9} y={10} />
  </Icon>
);

const ClockIcon = () => (
  <Icon>
    <circle cx="13" cy="13" r="12" fill="#1e6fc8" stroke="#0e4a90" />
    <circle cx="13" cy="13" r="8.500" fill="#e6f3fd" />
    <path d="M13 7v6.500h5M13 13L8.500 9" stroke="#333" strokeWidth="1.500" />
  </Icon>
);

const TemplateIcon = () => (
  <Icon>
    <rect x="1" y="2" width="24" height="21" fill="#fff" stroke="#4a8ccc" strokeWidth="2" />
    <path d="M1 4h24" stroke="#3f87c9" strokeWidth="4" />
    <path d="M4 11l4-1 3-1 3 1 4-2 4-1" stroke="#a83218" strokeWidth="2" />
    <path d="M2 13.500h22" stroke="#9cc4e8" />
    <path d="M4 20l4-2 3-2 4 3 3-3 4 4" stroke="#3aa03c" strokeWidth="2" />
  </Icon>
);

const SearchIcon = () => (
  <svg width="22" height="22" viewBox="0 0 22 22" fill="none" aria-hidden="true">
    <path d="M9 13l-7 7" stroke="#2e5fc0" strokeWidth="4" strokeLinecap="round" />
    <circle cx="13.500" cy="8" r="6" fill="#eef5ff" stroke="#3b6fd0" strokeWidth="2.200" />
  </svg>
);

const ChatIcon = () => (
  <svg width="34" height="26" viewBox="0 0 34 26" fill="none" aria-hidden="true">
    <path d="M22 1c7 0 11 3 11 7.500 0 3-2 5.500-5 6.500l1 4-5-3.500c-7 .5-12-2.500-12-7S15 1 22 1z" fill="#f0f0f6" stroke="#8a8a8a" strokeWidth="1.500" />
    <path d="M9 9.500c5 0 8 2.500 8 6s-3 6-8 6L5 24.500l.5-4C2.500 19.500 1 17.500 1 15.500c0-3.500 3-6 8-6z" fill="#f0f0f6" stroke="#7a7a7a" strokeWidth="1.500" />
  </svg>
);

/* -------------------------------------------------------------- charts */

const STEP = 8;

const Candle = ({ index, high, top, bottom, low, kind }) => {
  const x = index * STEP;
  return (
    <g fill="#0f0">
      <rect x={x} y={high} width="1" height={Math.max(low - high, 1)} />
      <rect x={x - 2} y={top} width="5" height={bottom - top} />
      {kind !== "n" && bottom - top > 2 && (
        <rect x={x - 1} y={top + 1} width="3" height={bottom - top - 2} fill={kind === "d" ? "#fff" : "#000"} />
      )}
    </g>
  );
};

const Cross = ({ x, y }) => (
  <path
    d={`M${x - 3} ${y - 4}L${x + 4} ${y + 4}M${x + 4} ${y - 4}L${x - 4} ${y + 4}`}
    stroke="#fff"
    strokeWidth="2.500"
    shapeRendering="auto"
  />
);

const Marks = ({ dy, at }) => at.map(([bar, y]) => <Cross key={bar} x={bar * STEP} y={y - dy} />);

const PricePlot = () => (
  <Canvas>
    <rect x="0" y="160" width="100%" height="1" fill="#778899" />
    {CANDLES.map((c, i) => (
      <Candle key={i} index={i} {...c} />
    ))}
    <path d="M2231 0h13l-6.500 8z" fill="#778899" />
  </Canvas>
);

const RatioPlot = () => (
  <Canvas>
    {UPPER.map((up, i) => {
      const top = Math.round(up / 3) - 12;
      const mid = Math.round(LOWER[i] / 3) - 12;
      return (
        <g key={i}>
          <rect x={i * STEP - 1} y={top} width="3" height={mid - top} fill="#f00" />
          <rect x={i * STEP - 1} y={mid} width="3" height={209 - mid} fill="#00f" />
        </g>
      );
    })}
    <Marks dy={612} at={[[215, 622], [216, 622]]} />
  </Canvas>
);

const averagePath = () => {
  let d = "";
  for (let i = 0; i < AVERAGE.length; i += 2) {
    const x = AVERAGE[i] - 5;
    const y = Math.round(AVERAGE[i + 1] / 3) - 224;
    d += i === 0 ? `M${x} ${y}` : `H${x}V${y}`;
  }
  return d;
};

const PulsePlot = () => (
  <Canvas>
    <path d={averagePath()} fill="none" stroke="#ffd700" strokeWidth="2" />
    {UPPER.map((_, i) => (
      <rect key={i} x={i * STEP - 1} y="199" width="3" height="1" fill="#00f" />
    ))}
    {PULSE.map((h, i) => (
      <rect key={i} x={(i + 188) * STEP - 1} y={199 - h} width="3" height={h} fill="#f00" />
    ))}
  </Canvas>
);

const StarPlot = () => (
  <Canvas>
    {STAR.map((h, i) => (
      <rect key={i} x={i * STEP} y={204 - Math.round(h / 3)} width="1" height={Math.round(h / 3)} fill="#f00" />
    ))}
    <Marks
      dy={1036}
      at={[[197, 1104], [198, 1103], [210, 1104], [211, 1090], [212, 1093], [213, 1079], [215, 1063], [216, 1046]]}
    />
  </Canvas>
);

const VertexPlot = () => (
  <Canvas>
    {VERTEX.map((h, i) => (
      <rect key={i} x={i * STEP} y="15" width="1" height={Math.round(h / 3)} fill="#00f" />
    ))}
    <Marks
      dy={1252}
      at={[[192, 1441], [197, 1444], [198, 1444], [210, 1444], [211, 1448], [212, 1448], [213, 1451], [215, 1455], [216, 1459]]}
    />
  </Canvas>
);

/* Labels: [text, y of the middle]; ticks: y of each tick. */
const PANES = [
  {
    weight: 422, caption: "v,M15  6016 6016 5998 6003", Chart: PricePlot, indent: 6,
    labels: [["6068", 41], ["6033", 106], ["5993", 180], ["5958", 245], ["5923", 310], ["5883", 384]],
    ticks: [40, 105, 179, 244, 309, 383],
    price: "6003",
  },
  {
    weight: 211, caption: "up-down-v9 1.0172 1.0161 0.9881 0.9851", Chart: RatioPlot, indent: 3,
    labels: [["1.0356", 11], ["0.9649", 200]], ticks: [2, 208],
  },
  {
    weight: 211, caption: "up-down-v6 0.7626 1743.8524 0.0000 1743.8524", Chart: PulsePlot, indent: 3,
    labels: [["1871.08", 11], ["0.00", 200], ["-89.0993", 200]], ticks: [2, 200, 208],
  },
  {
    weight: 215, caption: "buy sell star 1.0346 1.3064 0.7918 1.2629", Chart: StarPlot, indent: 3,
    labels: [["119.052", 11], ["0.00", 205], ["-5.66", 205]], ticks: [2, 204, 213],
  },
  {
    weight: 219, caption: "nrp vertex g -2.4388", Chart: VertexPlot, indent: 3,
    labels: [["3.6633", 11], ["0.00", 16], ["-51.994", 209]], ticks: [2, 16, 217],
  },
  {
    weight: 209, caption: "Grail indicator 1.0503 1.2032 0.8729 1.1456", indent: 3,
    labels: [["-922337", 11], ["-922337", 199]], ticks: [2, 207],
  },
];

const ChartPane = ({ weight, caption, Chart, labels, ticks, indent, price }) => (
  <Pane $weight={weight}>
    <Plot>
      {Chart && <Chart />}
      <Caption>{caption}</Caption>
    </Plot>
    <Scale>
      {ticks.map((y) => (
        <rect key={y} x="0" y={y} width="2" height="1" />
      ))}
      {labels.map(([text, y], i) => (
        <text key={i} x={indent} y={y + 5}>{text}</text>
      ))}
      {price && (
        <g>
          <rect x="1" y="153" width="42" height="17" />
          <text x={indent} y="167" fill="#000">{price}</text>
        </g>
      )}
    </Scale>
  </Pane>
);

/* ----------------------------------------------------------------- app */

const MENUS = ["文件(F)", "显示(V)", "插入(I)", "图表(C)", "工具(T)", "窗口(W)", "帮助(H)"];
const PERIODS = ["M1", "M5", "M15", "M30", "H1", "H4", "D1", "W1", "MN"];
const SHEETS = ["v,M15", "v,M3 (offline)", "v,H1", "v,M5"];

const Tool = ({ label, icon: Glyph, ...rest }) => (
  <ToolButton aria-label={label} {...rest}>
    <Glyph />
  </ToolButton>
);

const Split = ({ label, icon: Glyph }) => (
  <SplitButton aria-label={label}>
    <Glyph />
    <Caret />
  </SplitButton>
);

export default function App() {
  return (
    <Frame>
      <GlobalStyle />
      <Gradients />
      <TitleBar>
        <LogoIcon />
        <Title>2100026251: TED-Server - [v,M15]</Title>
        <WindowButton aria-label="Minimize">
          <svg width="16" height="16" shapeRendering="crispEdges"><path d="M0 7.500h15" stroke="#000" /></svg>
        </WindowButton>
        <WindowButton aria-label="Restore">
          <svg width="16" height="16" fill="none" stroke="#000" shapeRendering="crispEdges">
            <path d="M.5 3.500h11v11H.5zM3.500 3V.5h11v11H12" />
          </svg>
        </WindowButton>
        <WindowButton aria-label="Close">
          <svg width="16" height="16" stroke="#000"><path d="M.5 .5l14.500 14.500M15 .5L.5 15" /></svg>
        </WindowButton>
      </TitleBar>

      <MenuBar>
        <ChartsIcon />
        <MenuList>
          {MENUS.map((m) => <MenuButton key={m}>{m}</MenuButton>)}
        </MenuList>
        <ChildButton aria-label="Minimize chart">
          <svg width="8" height="8"><path d="M1 6h6" stroke="#708090" strokeWidth="2" /></svg>
        </ChildButton>
        <ChildButton aria-label="Restore chart">
          <svg width="9" height="9" fill="none" stroke="#708090"><path d="M.5 4h5v4h-5zM.5 4.500h5M2.500 3V1h6v4H6M2.500 1.500h6" /></svg>
        </ChildButton>
        <ChildButton aria-label="Close chart">
          <svg width="8" height="8" stroke="#708090" strokeWidth="2"><path d="M1 1l6 6M7 1L1 7" /></svg>
        </ChildButton>
      </MenuBar>

      <ToolRow>
        <Toolbar $lead={7}>
          <Split label="New chart" icon={NewChartIcon} />
          <Split label="Profiles" icon={ProfilesIcon} />
          <Divider />
          <Tool label="Market watch" icon={MarketIcon} />
          <Tool label="Crosshair" icon={CrosshairIcon} />
          <Tool label="Navigator" icon={NavigatorIcon} />
          <Tool label="Terminal" icon={TerminalIcon} />
          <Tool label="Strategy tester" icon={TesterIcon} />
          <Divider />
          <ToolButton $wide $muted>
            <OrderIcon />
            新订单
          </ToolButton>
          <Tool label="Editor" icon={BookIcon} />
          <Tool label="Hosting" icon={ServerIcon} />
          <Tool label="Signals" icon={SignalIcon} />
          <ToolButton $wide>
            <ExpertIcon />
            自动交易
          </ToolButton>
        </Toolbar>
        <Corner>
          <ToolButton aria-label="Search" $wide><SearchIcon /></ToolButton>
          <ChatIcon />
        </Corner>
      </ToolRow>

      <ToolRow>
        <Toolbar $lead={8}>
          <Tool label="Bar chart" icon={BarsIcon} />
          <Tool label="Candlesticks" icon={CandlesIcon} $pressed />
          <Tool label="Line chart" icon={LineIcon} />
          <Divider />
          <Tool label="Zoom in" icon={() => <LensIcon plus />} />
          <Tool label="Zoom out" icon={LensIcon} />
          <Tool label="Tile windows" icon={TilesIcon} />
          <Divider />
          <Tool label="Auto scroll" icon={ScrollIcon} $pressed />
          <Tool label="Chart shift" icon={ShiftIcon} $pressed />
          <Divider />
          <Split label="Indicators" icon={IndicatorsIcon} />
          <Split label="Periods" icon={ClockIcon} />
          <Split label="Templates" icon={TemplateIcon} />
        </Toolbar>
      </ToolRow>

      <ToolRow $last>
        <Toolbar $lead={7} $last>
          {PERIODS.map((p) => (
            <PeriodButton key={p} $pressed={p === "M15"}>{p}</PeriodButton>
          ))}
        </Toolbar>
      </ToolRow>

      <Workspace>
        <ChartWindow>
          {PANES.map((pane) => <ChartPane key={pane.caption} {...pane} />)}
          <TimeAxis>
            {TIMES.map((t) => <TimeMark key={t}>{t}</TimeMark>)}
          </TimeAxis>
        </ChartWindow>
        <Sill><Glass /></Sill>
      </Workspace>

      <TabBar>
        <Tabs>
          {SHEETS.map((s, i) => <Tab key={s} $active={i === 0}>{s}</Tab>)}
        </Tabs>
        <TabArrows>
          <ArrowButton aria-label="Scroll tabs left">
            <svg width="6" height="10"><path d="M6 0v10L0 5z" fill="#a0a0a0" /></svg>
          </ArrowButton>
          <ArrowButton aria-label="Scroll tabs right">
            <svg width="6" height="10"><path d="M0 0v10l6-5z" fill="#a0a0a0" /></svg>
          </ArrowButton>
        </TabArrows>
      </TabBar>
    </Frame>
  );
}
